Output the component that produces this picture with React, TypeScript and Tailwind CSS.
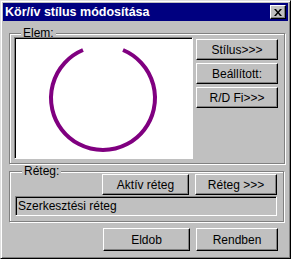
import React from "react";

const raised =
  "border border-t-white border-l-white border-r-black border-b-black shadow-[inset_-1px_-1px_0_#808080] bg-[#c0c0c0]";
const sunken =
  "border border-t-[#808080] border-l-[#808080] border-r-white border-b-white shadow-[inset_1px_1px_0_#000]";
const etched =
  "border border-[#808080] shadow-[inset_1px_1px_0_#fff,1px_1px_0_#fff]";

const Btn = ({ label, w, h = "h-[21px]" }: { label: string; w: string; h?: string }) => (
  <button className={`${raised} ${w} ${h} flex items-center justify-center text-[12px] text-black leading-none`}>
    {label}
  </button>
);

export default function App() {
  return (
    <div
      className="w-[291px] h-[259px] bg-[#c0c0c0] border border-t-[#dfdfdf] border-l-[#dfdfdf] border-r-black border-b-black shadow-[inset_1px_1px_0_#fff,inset_-1px_-1px_0_#808080] p-[2px] flex flex-col"
      style={{ fontFamily: '"Liberation Sans", Arial, sans-serif' }}
    >
      {/* title bar */}
      <div className="h-[18px] bg-[#000080] flex items-center justify-between pl-[2px] pr-[2px]">
        <span className="text-white font-bold text-[12.5px] leading-none">Kör/ív stílus módosítása</span>
        <div className={`${raised} w-[16px] h-[14px] flex items-center justify-center`}>
          <svg width="8" height="7" viewBox="0 0 8 7">
            <path d="M0 0h2l2 2.5L6 0h2L5 3.5 8 7H6L4 4.5 2 7H0l3-3.5z" fill="#000" />
          </svg>
        </div>
      </div>

      {/* Elem */}
      <fieldset className={`${etched} ml-[6px] mt-[6px] w-[275px] h-[137px] pl-[4px] pr-[6px] pb-[4px]`}>
        <legend className="ml-[7px] px-[2px] bg-[#c0c0c0] text-[12px] leading-[12px] -mb-[2px]">Elem:</legend>
        <div className="flex gap-[3px]">
          <div className={`${sunken} bg-white w-[179px] h-[122px]`}>
            <svg width="175" height="118" viewBox="0 0 175 118">
              <path
                d="M108 12 A52 52 0 1 1 68 12"
                fill="none"
                stroke="#800080"
                strokeWidth="4"
              />
            </svg>
          </div>
          <div className="flex flex-col gap-[3px] pt-[2px]">
            <Btn label="Stílus>>>" w="w-[82px]" />
            <Btn label="Beállított:" w="w-[82px]" />
            <Btn label="R/D Fi>>>" w="w-[82px]" />
          </div>
        </div>
      </fieldset>

      {/* Réteg */}
      <fieldset className={`${etched} ml-[6px] mt-[1px] w-[275px] h-[57px] pl-[5px] pr-[6px]`}>
        <legend className="ml-[7px] px-[2px] bg-[#c0c0c0] text-[12px] leading-[12px] -mb-[3px]">Réteg:</legend>
        <div className="flex justify-end gap-[6px]">
          <Btn label="Aktív réteg" w="w-[87px]" />
          <Btn label="Réteg >>>" w="w-[82px]" />
        </div>
        <div className={`${sunken} h-[20px] mt-[1px] flex items-center pl-[2px] text-[12px] leading-none`}>
          Szerkesztési réteg
        </div>
      </fieldset>

      <div className="flex justify-end gap-[6px] mt-[6px] pr-[10px]">
        <Btn label="Eldob" w="w-[87px]" h="h-[23px]" />
        <Btn label="Rendben" w="w-[82px]" h="h-[23px]" />
      </div>
    </div>
  );
}
